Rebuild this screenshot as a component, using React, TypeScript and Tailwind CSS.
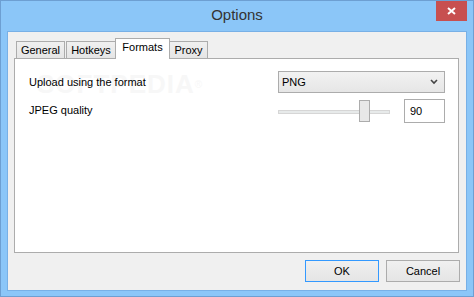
import React from "react";

const tabs = ["General", "Hotkeys", "Formats", "Proxy"];

export default function App() {
  return (
    <div
      className="w-[474px] h-[297px] border border-[#6d9fd2] bg-[#8bc6f8] flex flex-col"
      style={{ fontFamily: '"Liberation Sans", Arial, sans-serif' }}
    >
      {/* title bar */}
      <div className="relative h-[30px] shrink-0 flex items-center justify-center">
        <span className="text-[15px] text-[#333] -mt-[1px]">Options</span>
        <button className="absolute right-[6px] top-0 w-[31px] h-[20px] bg-[#c75050] flex items-center justify-center">
          <svg width="9" height="8" viewBox="0 0 9 8">
            <path d="M1 1 L8 7 M8 1 L1 7" stroke="white" strokeWidth="2" />
          </svg>
        </button>
      </div>

      {/* client */}
      <div className="mx-[6px] h-[260px] border border-[#78b0e6] bg-[#f0f0f0] flex flex-col text-[11px] text-black">
        <div className="flex flex-col ml-[6px] mr-[7px] mt-[6px]">
          <div className="flex items-end pl-[2px] -mb-px relative z-10">
            {tabs.map((t) =>
              t === "Formats" ? (
                <div
                  key={t}
                  className="w-[55px] h-[21px] -mx-[1px] border border-b-0 border-[#acacac] bg-white flex justify-center pt-[3px] leading-none relative z-10"
                >
                  {t}
                </div>
              ) : (
                <div
                  key={t}
                  className={
                    "h-[18px] border border-[#acacac] bg-gradient-to-b from-[#f0f0f0] to-[#e5e5e5] flex justify-center pt-[3px] leading-none " +
                    (t === "General" ? "w-[49px]" : t === "Hotkeys" ? "w-[50px] ml-[1px]" : "w-[39px]")
                  }
                >
                  {t}
                </div>
              )
            )}
          </div>

          <div className="relative h-[195px] border border-[#acacac] bg-white pt-[12px] pl-[14px] pr-[13px] flex flex-col gap-[6px]">
            <span className="absolute left-[22px] top-[6px] text-[26px] font-bold tracking-[1px] text-[#f7f7f7] select-none">
              SOFTPEDIA<sup className="text-[10px] font-normal">®</sup>
            </span>
            <div className="relative flex items-center h-[22px]">
              <span className="flex-1">Upload using the format</span>
              <div className="w-[167px] h-[22px] border border-[#acacac] bg-gradient-to-b from-[#f2f2f2] to-[#e6e6e6] flex items-center pl-[3px] pr-[6px]">
                <span className="flex-1">PNG</span>
                <svg width="8" height="6" viewBox="0 0 8 6">
                  <path d="M1 1 L4 4 L7 1" stroke="#444" strokeWidth="1.6" fill="none" />
                </svg>
              </div>
            </div>
            <div className="relative flex items-center h-[24px]">
              <span className="flex-1 -mt-[2px]">JPEG quality</span>
              <div className="w-[167px] flex items-center gap-[14px]">
                <div className="relative w-[112px] h-[24px] flex items-center">
                  <div className="w-full h-[4px] mt-[2px] border border-[#d6d6d6] bg-[#e7eaea]" />
                  <div className="absolute left-[81px] top-[1px] w-[11px] h-[22px] border border-[#acacac] bg-[#e8e8e8]" />
                </div>
                <div className="w-[41px] h-[24px] border border-[#acacac] bg-white flex items-center pl-[5px]">
                  90
                </div>
              </div>
            </div>
          </div>
        </div>

        <div className="flex justify-end gap-[7px] mt-[7px] mr-[6px]">
          <button className="w-[74px] h-[22px] border border-[#3399ff] bg-gradient-to-b from-[#f0f0f0] to-[#e5e5e5]">
            OK
          </button>
          <button className="w-[74px] h-[22px] border border-[#acacac] bg-gradient-to-b from-[#f0f0f0] to-[#e5e5e5]">
            Cancel
          </button>
        </div>
      </div>
    </div>
  );
}
